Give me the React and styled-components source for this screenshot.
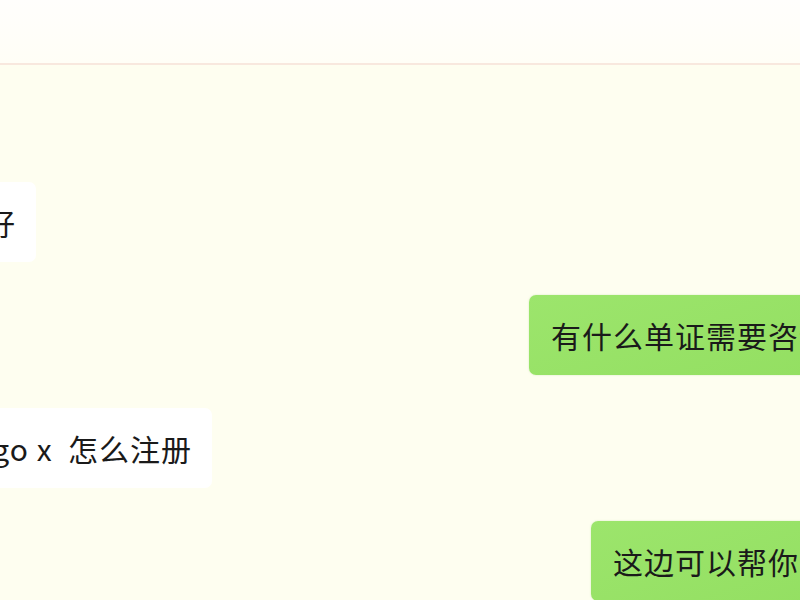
import React from "react";
import styled, { createGlobalStyle } from "styled-components";

const GlobalStyle = createGlobalStyle`
  html, body {
    margin: 0;
    padding: 0;
    background: #FEFEF0;
    overflow: hidden;
  }
  body {
    font-family: "Noto Sans CJK SC", "Noto Sans", sans-serif;
  }
`;

const Page = styled.div`
  width: 800px;
  height: 600px;
  overflow: hidden;
  display: flex;
  flex-direction: column;
  background: #FEFEF0;
`;

const Header = styled.div`
  height: 63px;
  flex-shrink: 0;
  background: linear-gradient(#FFFEFC, #FFFEF6);
  border-bottom: 2px solid #F8E8DE;
`;

const Thread = styled.div`
  display: flex;
  flex-direction: column;
  gap: 33px;
  margin: 0 -114px 0 -66px;
  padding-top: 117px;
`;

const Row = styled.div`
  display: flex;
  justify-content: ${(p) => (p.$mine ? "flex-end" : "flex-start")};
`;

const Bubble = styled.div`
  box-sizing: border-box;
  height: 80px;
  display: flex;
  align-items: center;
  margin-left: ${(p) => p.$shift || 0}px;
  padding: 0 ${(p) => (p.$mine ? "22px" : "20px")} 0 22px;
  border-radius: 7px;
  background: ${(p) => (p.$mine ? "linear-gradient(160deg, #9CE56C, #92DE60)" : "#FFFFFF")};
  box-shadow: ${(p) => (p.$mine ? "0 0 2px rgba(130, 190, 90, 0.35)" : "none")};
  color: #1A1A1A;
  font-size: 30px;
  letter-spacing: 1px;
  white-space: pre;
`;

const messages = [
  { id: 1, mine: false, text: "你好", shift: -2 },
  { id: 2, mine: true, text: "有什么单证需要咨询的吗" },
  { id: 3, mine: false, text: "Cargo x  怎么注册", shift: -14 },
  { id: 4, mine: true, text: "这边可以帮你注册哦" },
];

export default function App() {
  return (
    <Page>
      <GlobalStyle />
      <Header />
      <Thread>
        {messages.map((m) => (
          <Row key={m.id} $mine={m.mine}>
            <Bubble $mine={m.mine} $shift={m.shift}>
              {m.text}
            </Bubble>
          </Row>
        ))}
      </Thread>
    </Page>
  );
}
